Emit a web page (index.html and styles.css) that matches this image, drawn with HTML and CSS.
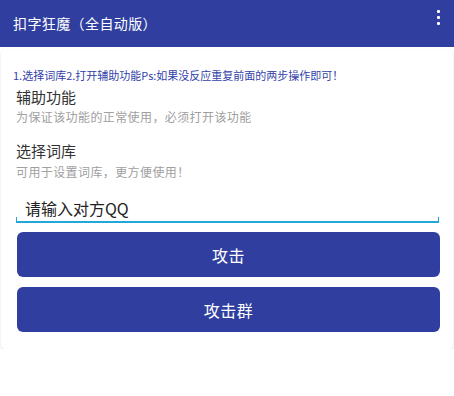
FILE: index.html
```html
<!DOCTYPE html>
<html>
<head>
<meta charset="utf-8">
<link rel="stylesheet" href="styles.css">
</head>
<body>
<header class="toolbar">
  <span class="title">扣字狂魔（全自动版）</span>
  <span class="menu"><i></i><i></i><i></i></span>
</header>
<main class="card">
  <p class="hint">1.选择词库2.打开辅助功能Ps:如果没反应重复前面的两步操作即可！</p>
  <div class="item">
    <div class="item-title">辅助功能</div>
    <div class="item-sub">为保证该功能的正常使用，必须打开该功能</div>
  </div>
  <div class="item">
    <div class="item-title">选择词库</div>
    <div class="item-sub">可用于设置词库，更方便使用！</div>
  </div>
  <div class="field"><span>请输入对方QQ</span></div>
  <button class="btn">攻击</button>
  <button class="btn">攻击群</button>
</main>
</body>
</html>
```
FILE: styles.css
```css
* { box-sizing: border-box; }
body {
  margin: 0;
  background: #fff;
  font-family: "Noto Sans CJK SC", Roboto, "Noto Sans", sans-serif;
}
.toolbar {
  height: 47px;
  background: #303f9f;
  display: flex;
  align-items: center;
  justify-content: space-between;
  padding: 0 13px 0 13px;
  color: #fff;
}
.title {
  font-size: 14px;
  font-weight: 400;
  letter-spacing: 0.4px;
  margin-top: -1px;
}
.menu {
  display: flex;
  flex-direction: column;
  gap: 3px;
  align-self: flex-start;
  margin-top: 10px;
  margin-right: 1px;
}
.menu i {
  display: block;
  width: 3px;
  height: 3px;
  background: #fff;
  border-radius: 1px;
}
.card {
  margin: 3px 1px 0 1px;
  height: 299px;
  border-radius: 4px;
  box-shadow: 0 1px 2px rgba(0,0,0,0.12), 0 0 1px rgba(0,0,0,0.08);
  padding: 18px 14px 0 15px;
  display: flex;
  flex-direction: column;
}
.hint {
  margin: 0 0 0 -3px;
  font-size: 11px;
  line-height: 14px;
  color: #3241a8;
  white-space: nowrap;
}
.item-title {
  font-size: 15px;
  line-height: 20px;
  color: #333;
  margin-top: 5px;
}
.item-sub {
  font-size: 12px;
  line-height: 16px;
  color: #a0a0a0;
  margin-top: 2px;
  letter-spacing: 0.4px;
}
.item + .item .item-title { margin-top: 16px; }
.item + .item .item-sub { margin-top: 3px; }
.field {
  margin-top: 17px;
  height: 26px;
  border-bottom: 2px solid #22a7d8;
  position: relative;
  padding-left: 9px;
  font-size: 16px;
  line-height: 22px;
  color: #222;
}
.field::before, .field::after {
  content: "";
  position: absolute;
  bottom: 0;
  width: 1px;
  height: 4px;
  background: #22a7d8;
}
.field::before { left: 0; }
.field::after { right: 0; }
.btn {
  margin: 9px 0 0 1px;
  width: 423px;
  height: 45px;
  border: none;
  border-radius: 6px;
  background: #303f9f;
  color: #fff;
  font-family: inherit;
  font-size: 16px;
  letter-spacing: 0.5px;
  flex: none;
}
.btn + .btn { margin-top: 10px; }
```
